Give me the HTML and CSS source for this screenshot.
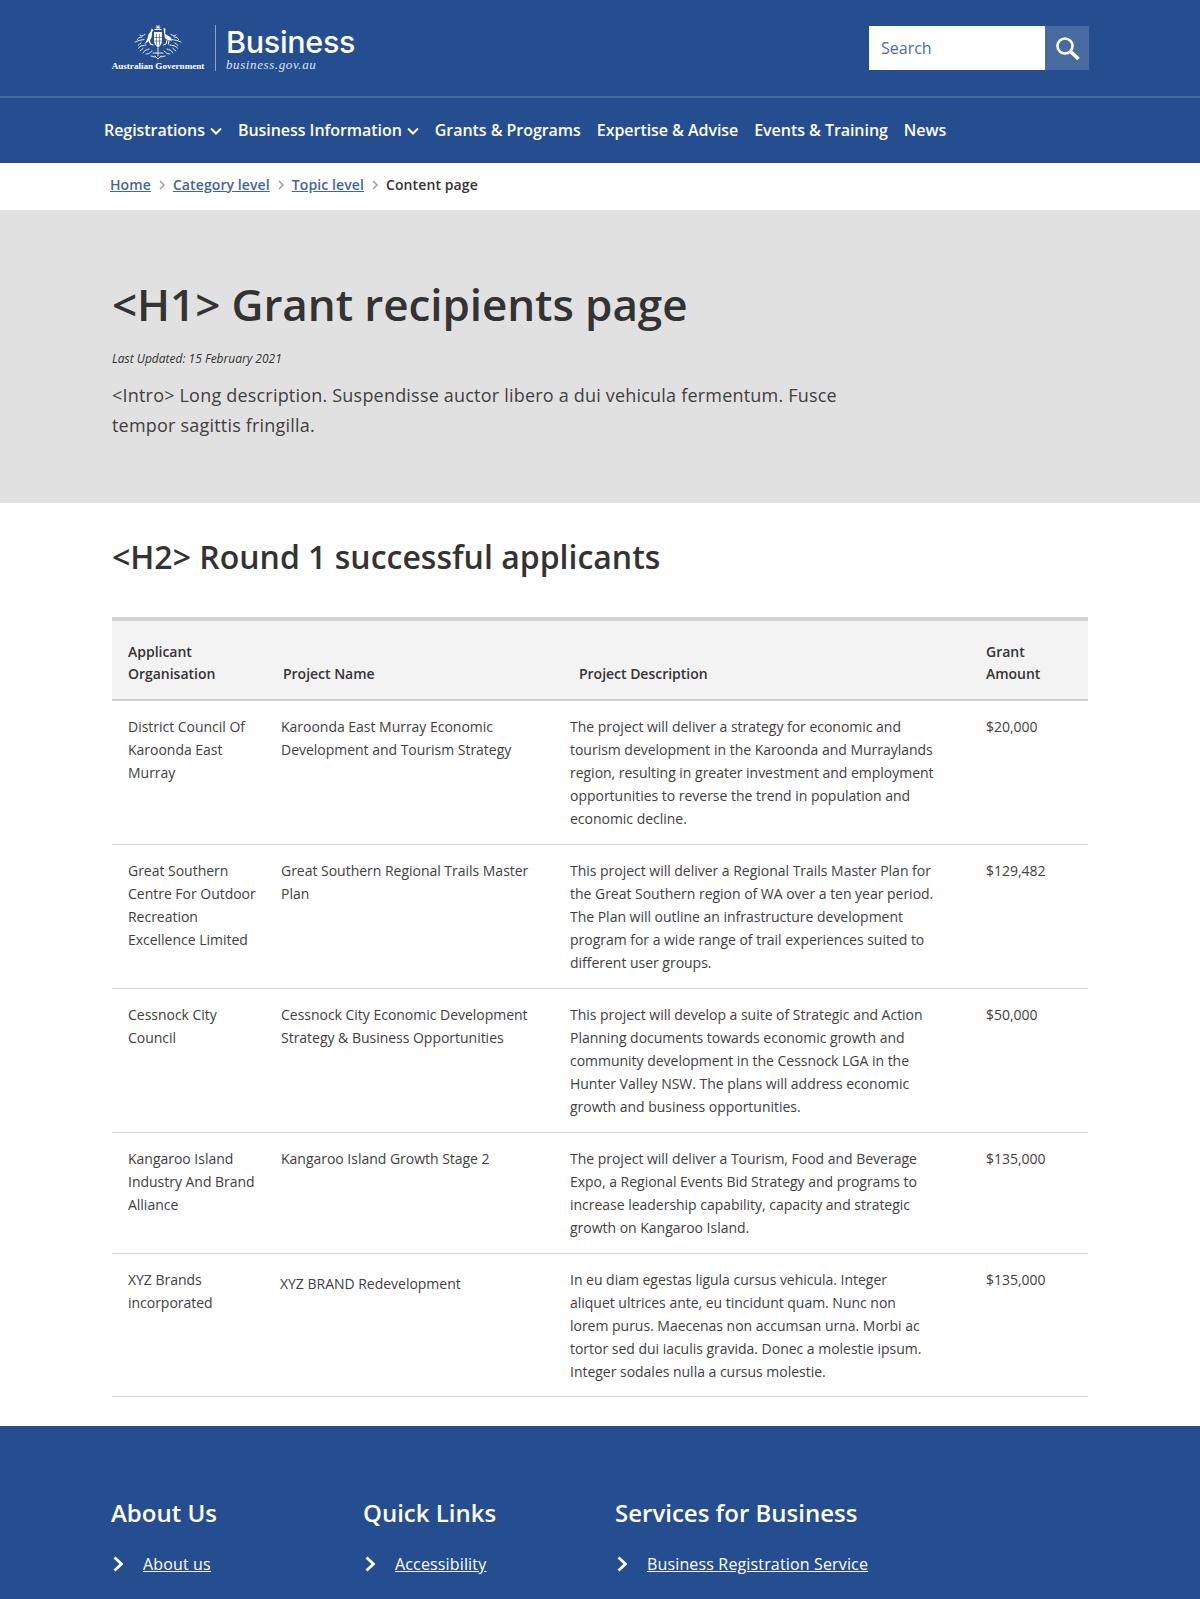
FILE: index.html
```html
<!DOCTYPE html>
<html lang="en">

<head>
    <meta charset="UTF-8">
    <meta name="viewport" content="width=device-width, initial-scale=1.0">
    <title>Grant recipients page</title>
    <link rel="stylesheet" href="styles.css">
</head>

<body>
    <header class="top">
        <div class="brand">
            <div class="gov">
                <svg class="crest" width="48" height="35" viewBox="0 0 48 35" fill="none" stroke="#fff" stroke-width=".9" stroke-linecap="round">
                    <!-- star and wreath -->
                    <path d="M24 0.5v3.5M22 2.2h4M22.6 1l2.8 2.4M25.4 1l-2.8 2.4" stroke-width=".8" />
                    <path d="M21 4.5h6" stroke-width="1.2" />
                    <!-- shield -->
                    <path d="M20 7h8v9c0 3-2 5-4 6.500-2-1.500-4-3.500-4-6.500z" fill="#fff" stroke="none" />
                    <path d="M22.500 9v11M25.500 9v11M20.500 12.500h7M20.500 16h7" stroke="#254e90" stroke-width=".6" />
                    <!-- kangaroo -->
                    <path d="M18 3l.8 2 1 .6-1.600.8-.4 3c.4 2-.6 4.500-2.400 6l-2.800 2.400-2.400 1.200 2-2.400 1.400-3.600c.6-3 1.600-5 3-6.400z" fill="#fff" stroke="none" />
                    <path d="M15 15l1.500 4 2.500 1" stroke-width="1.200" />
                    <!-- emu -->
                    <path d="M29.500 3.500c1.200-.6 2-.2 2 .8l-.4 4.200c.6 1.500 3 2 5 3.500 1.200 1 1.400 2.500 2.400 3.500-2.500 0-4-.2-5.500-1-1.800-.8-2.600-2-2.500-4z" fill="#fff" stroke="none" />
                    <path d="M33 15l-1 4-2.500 1M35 15.500l-.5 3.500" stroke-width="1" />
                    <!-- wattle sprays -->
                    <path d="M11 9.500l-3 1.500-2-1M8 12l-3 .5-1.500 2M10 14.500l-5 1-4 1.500M7 18l-3 2.500M12 20l-5 1-3 2.500M9 23.500l-3 2.500M15 24l-4 1.500-2 2.500M18 26l-3 2.500-3 .5" stroke-dasharray="1.400 .9" />
                    <path d="M37 9.500l3 1.500 2-1M40 12l3 .5 1.500 2M38 14.500l5 1 4 1.500M41 18l3 2.500M36 20l5 1 3 2.500M39 23.500l3 2.500M33 24l4 1.500 2 2.500M30 26l3 2.500 3 .5" stroke-dasharray="1.400 .9" />
                    <path d="M19 28h10M24 23v8M21 31l3 3 3-3M17 31l4 1M31 31l-4 1" stroke-dasharray="1.600 .8" />
                </svg>
                <div class="gov-name">Australian Government</div>
            </div>
            <div class="site">
                <div class="site-name">Business</div>
                <div class="site-url">business.gov.au</div>
            </div>
        </div>
        <form class="search">
            <div class="search-input">Search</div>
            <button type="button" class="search-btn" aria-label="Search">
                <svg width="26" height="26" viewBox="0 0 26 26" fill="none" stroke="#fff">
                    <circle cx="10" cy="10" r="7.500" stroke-width="2.600" />
                    <path d="M15.500 15.500l8 7.500" stroke-width="3.600" />
                </svg>
            </button>
        </form>
    </header>

    <nav class="nav">
        <a class="drop">Registrations<svg width="12" height="8" viewBox="0 0 12 8" fill="none" stroke="#fff" stroke-width="2"><path d="M1 1.500l5 5 5-5" /></svg></a>
        <a class="drop">Business Information<svg width="12" height="8" viewBox="0 0 12 8" fill="none" stroke="#fff" stroke-width="2"><path d="M1 1.500l5 5 5-5" /></svg></a>
        <a>Grants &amp; Programs</a>
        <a>Expertise &amp; Advise</a>
        <a>Events &amp; Training</a>
        <a>News</a>
    </nav>

    <div class="crumbs">
        <a href="#">Home</a>
        <svg width="6" height="10" viewBox="0 0 6 10" fill="none" stroke="#999" stroke-width="1.400"><path d="M1 1l4 4-4 4" /></svg>
        <a href="#">Category level</a>
        <svg width="6" height="10" viewBox="0 0 6 10" fill="none" stroke="#999" stroke-width="1.400"><path d="M1 1l4 4-4 4" /></svg>
        <a href="#">Topic level</a>
        <svg width="6" height="10" viewBox="0 0 6 10" fill="none" stroke="#999" stroke-width="1.400"><path d="M1 1l4 4-4 4" /></svg>
        <span>Content page</span>
    </div>

    <section class="hero">
        <h1>&lt;H1&gt; Grant recipients page</h1>
        <p class="updated">Last Updated: 15 February 2021</p>
        <p class="intro">&lt;Intro&gt; Long description. Suspendisse auctor libero a dui vehicula fermentum. Fusce tempor sagittis fringilla.</p>
    </section>

    <main class="content">
        <h2>&lt;H2&gt; Round 1 successful applicants</h2>
        <table class="grants">
            <colgroup>
                <col class="c1">
                <col class="c2">
                <col class="c3">
                <col class="c4">
            </colgroup>
            <thead>
                <tr>
                    <th>Applicant Organisation</th>
                    <th class="th-name">Project Name</th>
                    <th class="th-desc">Project Description</th>
                    <th>Grant Amount</th>
                </tr>
            </thead>
            <tbody>
                <tr>
                    <td>District Council Of Karoonda East Murray</td>
                    <td>Karoonda East Murray Economic Development and Tourism Strategy</td>
                    <td>The project will deliver a strategy for economic and tourism development in the Karoonda and Murraylands region, resulting in greater investment and employment opportunities to reverse the trend in population and economic decline.</td>
                    <td>$20,000</td>
                </tr>
                <tr>
                    <td>Great Southern Centre For Outdoor Recreation Excellence Limited</td>
                    <td>Great Southern Regional Trails Master Plan</td>
                    <td>This project will deliver a Regional Trails Master Plan for the Great Southern region of WA over a ten year period. The Plan will outline an infrastructure development program for a wide range of trail experiences suited to different user groups.</td>
                    <td>$129,482</td>
                </tr>
                <tr>
                    <td>Cessnock City Council</td>
                    <td>Cessnock City Economic Development Strategy &amp; Business Opportunities</td>
                    <td>This project will develop a suite of Strategic and Action Planning documents towards economic growth and community development in the Cessnock LGA in the Hunter Valley NSW. The plans will address economic growth and business opportunities.</td>
                    <td>$50,000</td>
                </tr>
                <tr>
                    <td>Kangaroo Island Industry And Brand Alliance</td>
                    <td>Kangaroo Island Growth Stage 2</td>
                    <td>The project will deliver a Tourism, Food and Beverage Expo, a Regional Events Bid Strategy and programs to increase leadership capability, capacity and strategic growth on Kangaroo Island.</td>
                    <td>$135,000</td>
                </tr>
                <tr>
                    <td>XYZ Brands incorporated</td>
                    <td><p class="xyz">XYZ BRAND Redevelopment</p></td>
                    <td>In eu diam egestas ligula cursus vehicula. Integer aliquet ultrices ante, eu tincidunt quam. Nunc non lorem purus. Maecenas non accumsan urna. Morbi ac tortor sed dui iaculis gravida. Donec a molestie ipsum. Integer sodales nulla a cursus molestie.</td>
                    <td>$135,000</td>
                </tr>
            </tbody>
        </table>
    </main>

    <footer class="foot">
        <div class="foot-col">
            <h3>About Us</h3>
            <a class="foot-link" href="#"><svg width="12" height="16" viewBox="0 0 12 16" fill="none" stroke="#fff" stroke-width="2.800"><path d="M3.500 1.500l7 6.500-7 6.500" /></svg><span>About us</span></a>
        </div>
        <div class="foot-col">
            <h3>Quick Links</h3>
            <a class="foot-link" href="#"><svg width="12" height="16" viewBox="0 0 12 16" fill="none" stroke="#fff" stroke-width="2.800"><path d="M3.500 1.500l7 6.500-7 6.500" /></svg><span>Accessibility</span></a>
        </div>
        <div class="foot-col">
            <h3>Services for Business</h3>
            <a class="foot-link" href="#"><svg width="12" height="16" viewBox="0 0 12 16" fill="none" stroke="#fff" stroke-width="2.800"><path d="M3.500 1.500l7 6.500-7 6.500" /></svg><span>Business Registration Service</span></a>
        </div>
    </footer>
</body>

</html>
```

FILE: styles.css
```css
* {
    box-sizing: border-box;
}

html,
body {
    height: 1599px;
    overflow: hidden;
}

body {
    margin: 0;
    font-family: "Open Sans", "Noto Sans", sans-serif;
    color: #333;
    background-color: #fff;
}

.top {
    height: 98px;
    padding: 26px 111px 0 112px;
    display: flex;
    justify-content: space-between;
    background-color: #254e90;
    border-bottom: 2px solid #466ba2;
}

.brand {
    display: flex;
    color: #fff;
}

.gov {
    width: 92px;
    margin-top: -1px;
    display: flex;
    flex-direction: column;
    align-items: center;
}

.crest {
    display: block;
}

.gov-name {
    font-family: "Liberation Serif", serif;
    font-size: 9.100px;
    font-weight: bold;
    line-height: 12px;
    white-space: nowrap;
}

.site {
    margin: -1px 0 0 11px;
    height: 46px;
    padding-left: 10px;
    border-left: 1px solid #8ba3c7;
}

.site-name {
    font-family: "Inter", sans-serif;
    font-size: 30.500px;
    font-weight: 500;
    line-height: 33px;
    letter-spacing: -0.3px;
}

.site-url {
    font-family: "Liberation Serif", serif;
    font-size: 13px;
    font-style: italic;
    line-height: 13px;
    letter-spacing: 0.6px;
    color: #dbe3ef;
}

.search {
    display: flex;
    height: 44px;
}

.search-input {
    width: 176px;
    padding-left: 12px;
    font-size: 16px;
    line-height: 44px;
    color: #4a6ba3;
    background-color: #fff;
}

.search-btn {
    width: 44px;
    padding: 4px 0 0 2px;
    border: 0;
    background-color: #486ba1;
}

.nav {
    height: 65px;
    padding: 0 0 2px 104px;
    display: flex;
    gap: 16px;
    align-items: center;
    background-color: #254e90;
    font-size: 16px;
    font-weight: 600;
    letter-spacing: -0.05px;
    color: #fff;
}

.drop svg {
    margin-left: 5px;
    vertical-align: 1px;
}

.crumbs {
    height: 47px;
    padding: 0 0 4px 110px;
    display: flex;
    gap: 8px;
    align-items: center;
    font-size: 14px;
    font-weight: 600;
    letter-spacing: 0.1px;
}

.crumbs a {
    color: #41669f;
}

.hero {
    height: 293px;
    padding: 64px 112px 0;
    background-color: #e1e1e1;
}

h1 {
    margin: 0;
    font-size: 44px;
    font-weight: 600;
    line-height: 60px;
    letter-spacing: -0.08px;
}

.updated {
    margin: 16px 0 0;
    font-size: 12px;
    font-style: italic;
    line-height: 18px;
}

.intro {
    width: 760px;
    margin: 12px 0 0;
    font-size: 18px;
    line-height: 30px;
    letter-spacing: 0.2px;
    color: #404040;
}

.content {
    height: 923px;
    padding: 32px 112px 0;
}

h2 {
    margin: 0;
    font-size: 32px;
    font-weight: 600;
    line-height: 44px;
}

.grants {
    width: 976px;
    margin-top: 38px;
    border-collapse: collapse;
    table-layout: fixed;
    font-size: 14px;
    line-height: 23px;
    letter-spacing: -0.02px;
    color: #404040;
}

.c1 {
    width: 153px;
}

.c2 {
    width: 289px;
}

.c3 {
    width: 416px;
}

.grants th {
    padding: 20px 16px 14px;
    text-align: left;
    vertical-align: bottom;
    font-weight: 600;
    line-height: 22px;
    color: #333;
    background-color: #f3f3f3;
    border-top: 4px solid #d2d2d2;
    border-bottom: 2px solid #d2d2d2;
}

.grants .th-name {
    padding-left: 18px;
}

.grants .th-desc {
    padding-left: 25px;
}

.grants td {
    padding: 14px 16px 14px;
    vertical-align: top;
    border-bottom: 1px solid #d2d2d2;
}

.grants td:first-child {
    padding-right: 8px;
}

.grants td:nth-child(3) {
    padding-right: 36px;
}

.grants tr:last-child td {
    padding-bottom: 13px;
}

.xyz {
    margin: 4px 0 0 -1px;
}

.foot {
    height: 173px;
    padding: 70px 0 0 111px;
    display: flex;
    background-color: #254e90;
    color: #fff;
}

.foot-col {
    width: 252px;
}

.foot h3 {
    margin: 0;
    font-size: 24px;
    font-weight: 600;
    line-height: 34px;
}

.foot-link {
    margin-top: 22px;
    display: flex;
    align-items: center;
    color: #fff;
    font-size: 16px;
    line-height: 24px;
    letter-spacing: 0.15px;
    white-space: nowrap;
}

.foot-link svg {
    flex: none;
    margin-right: 20px;
}

.foot-link span {
    text-decoration: underline;
}
```
